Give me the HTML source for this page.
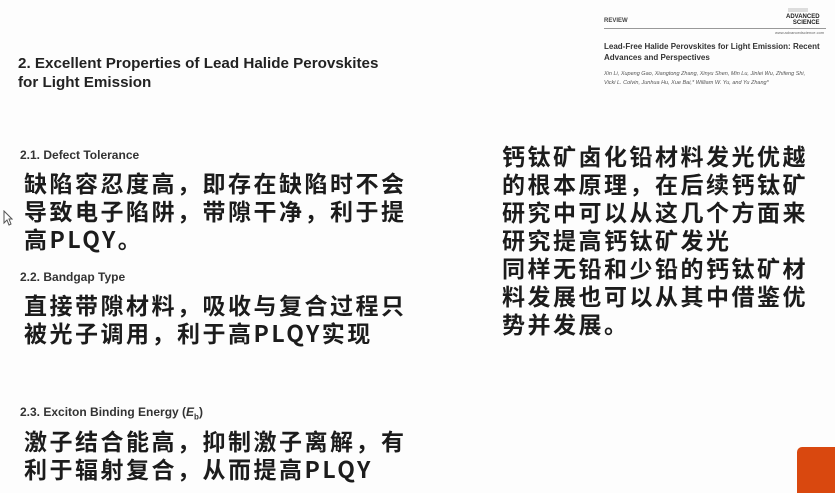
<!DOCTYPE html>
<html><head><meta charset="utf-8"><style>
body{margin:0;width:835px;height:493px;background:#fdfdfd;position:relative;overflow:hidden;font-family:"Liberation Sans","Noto Sans CJK SC",sans-serif;color:#1a1a1a}
.a{position:absolute;white-space:nowrap}
.h{font-size:15.2px;font-weight:bold;line-height:19px;color:#222}
.s{font-size:12px;font-weight:bold;color:#333}
.c{font-size:23px;font-weight:bold;line-height:28px;letter-spacing:2.5px;font-family:"Noto Sans CJK SC","WenQuanYi Zen Hei",sans-serif;color:#1c1c1c}
</style></head><body>
<div class="a h" style="left:18px;top:54px">2. Excellent Properties of Lead Halide Perovskites<br>for Light Emission</div>
<div class="a s" style="left:20px;top:148px">2.1. Defect Tolerance</div>
<div class="a c" style="left:24px;top:168px">缺陷容忍度高，即存在缺陷时不会<br>导致电子陷阱，带隙干净，利于提<br>高PLQY。</div>
<div class="a s" style="left:20px;top:270px">2.2. Bandgap Type</div>
<div class="a c" style="left:24px;top:290px">直接带隙材料，吸收与复合过程只<br>被光子调用，利于高PLQY实现</div>
<div class="a s" style="left:20px;top:405px">2.3. Exciton Binding Energy (<i>E</i><sub style="font-size:8px">b</sub>)</div>
<div class="a c" style="left:24px;top:426px">激子结合能高，抑制激子离解，有<br>利于辐射复合，从而提高PLQY</div>
<div class="a c" style="left:502px;top:141px">钙钛矿卤化铅材料发光优越<br>的根本原理，在后续钙钛矿<br>研究中可以从这几个方面来<br>研究提高钙钛矿发光<br>同样无铅和少铅的钙钛矿材<br>料发展也可以从其中借鉴优<br>势并发展。</div>
<div class="a" style="left:604px;top:18px;font-size:6px;font-weight:bold;color:#444">REVIEW</div>
<div class="a" style="left:786px;top:14px;font-size:6px;font-weight:bold;line-height:6px;text-align:right;color:#222">ADVANCED<br>SCIENCE</div>
<div class="a" style="left:788px;top:8px;width:20px;height:4px;background:#ddd"></div>
<div class="a" style="left:604px;top:28px;width:222px;height:1px;background:#999"></div>
<div class="a" style="left:775px;top:30px;font-size:4px;color:#666">www.advancedscience.com</div>
<div class="a" style="left:604px;top:41px;font-size:8px;font-weight:bold;line-height:11px;color:#333">Lead-Free Halide Perovskites for Light Emission: Recent<br>Advances and Perspectives</div>
<div class="a" style="left:604px;top:70px;font-size:5.5px;font-style:italic;line-height:9px;color:#555">Xin Li, Xupeng Gao, Xiangtong Zhang, Xinyu Shen, Min Lu, Jinlei Wu, Zhifeng Shi,<br>Vicki L. Colvin, Junhua Hu, Xue Bai,* William W. Yu, and Yu Zhang*</div>
<div class="a" style="left:797px;top:447px;width:38px;height:46px;background:#d9480f;border-top-left-radius:5px"></div>
<svg class="a" style="left:3px;top:210px" width="10" height="16" viewBox="0 0 10 16"><path d="M1 1 L1 13 L4 10 L6 15 L8 14 L6 9 L9 9 Z" fill="#fff" stroke="#555" stroke-width="1"/></svg>
</body></html>
